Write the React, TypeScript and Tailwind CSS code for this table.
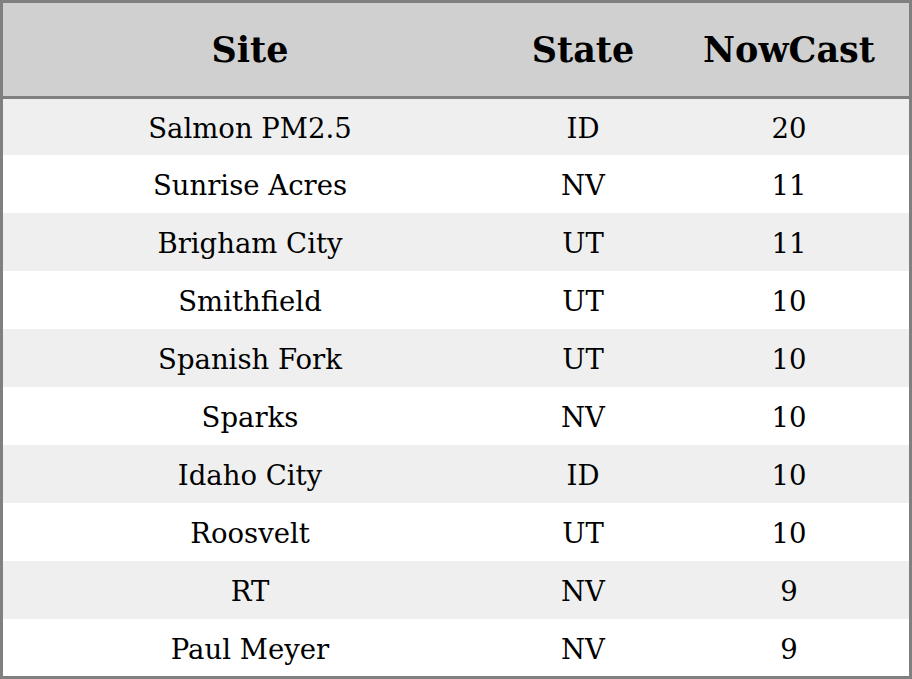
const rows: [string, string, string][] = [
  ['Salmon PM2.5', 'ID', '20'],
  ['Sunrise Acres', 'NV', '11'],
  ['Brigham City', 'UT', '11'],
  ['Smithfield', 'UT', '10'],
  ['Spanish Fork', 'UT', '10'],
  ['Sparks', 'NV', '10'],
  ['Idaho City', 'ID', '10'],
  ['Roosvelt', 'UT', '10'],
  ['RT', 'NV', '9'],
  ['Paul Meyer', 'NV', '9'],
]

export default function App() {
  return (
    <div
      className="w-[912px] h-[679px] border-[3px] border-[#808080] bg-white text-black"
      style={{ fontFamily: '"DejaVu Serif", serif' }}
    >
      <div className="grid grid-cols-[494px_172px_240px] h-[93px] items-center bg-[#d0d0d0] text-[35px] leading-none font-bold text-center">
        <div>Site</div>
        <div>State</div>
        <div>NowCast</div>
      </div>
      <div className="h-[3px] bg-[#808080]" />
      {rows.map(([site, state, now], i) => (
        <div
          key={site}
          className={`grid grid-cols-[494px_172px_240px] items-center pt-[4px] text-center text-[27.5px] leading-none ${
            i === 0 ? 'h-[56px]' : i === rows.length - 1 ? 'h-[57px]' : 'h-[58px]'
          } ${i % 2 === 0 ? 'bg-[#efefef]' : 'bg-white'}`}
        >
          <div>{site}</div>
          <div>{state}</div>
          <div>{now}</div>
        </div>
      ))}
    </div>
  )
}
